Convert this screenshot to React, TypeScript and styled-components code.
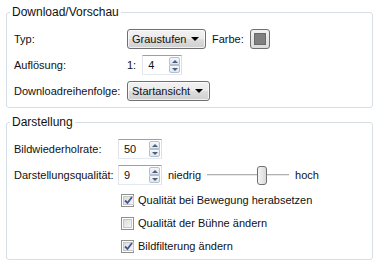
import React from "react"
import styled, { createGlobalStyle } from "styled-components"

const GlobalStyle = createGlobalStyle`
  html, body {
    margin: 0;
    padding: 0;
    background: #ffffff;
  }
  body {
    font-family: "Liberation Sans", Arial, sans-serif;
    font-size: 11px;
    color: #111111;
  }
`

const Page = styled.div`
  width: 367px;
  padding: 5px 0 0 6px;
  display: flex;
  flex-direction: column;
  gap: 7px;
`

const Group = styled.fieldset<{ $bottom: number }>`
  margin: 0;
  padding: 10px 7px ${(p) => p.$bottom}px 7px;
  border: 1px solid #d5dfe5;
  border-radius: 3px;
`

const Legend = styled.legend`
  margin-left: -4px;
  padding: 0 2px;
  line-height: 14px;
  font-size: 12px;
`

const Rows = styled.div<{ $labelWidth: number }>`
  display: grid;
  grid-template-columns: ${(p) => p.$labelWidth}px 1fr;
  row-gap: 6px;
  align-items: center;
`

const Label = styled.div`
  font-size: 11px;
  line-height: 20px;
  white-space: nowrap;
`

const Controls = styled.div`
  display: flex;
  align-items: center;
  gap: 6px;
  height: 20px;
  white-space: nowrap;
`

const Combo = styled.div<{ $width: number }>`
  box-sizing: border-box;
  width: ${(p) => p.$width}px;
  height: 20px;
  display: flex;
  align-items: center;
  justify-content: space-between;
  padding: 0 6px 0 4px;
  border: 1px solid #707070;
  border-radius: 3px;
  background: linear-gradient(#f2f2f2 0%, #ebebeb 48%, #dddddd 52%, #cfcfcf 100%);
  box-shadow: inset 0 0 0 1px rgba(255, 255, 255, 0.7);
`

const Arrow = styled.span`
  width: 0;
  height: 0;
  border-left: 4px solid transparent;
  border-right: 4px solid transparent;
  border-top: 4px solid #000000;
`

const Swatch = styled.div`
  box-sizing: border-box;
  width: 20px;
  height: 20px;
  padding: 3px;
  border: 1px solid #707070;
  border-radius: 3px;
  background: linear-gradient(#f2f2f2, #dcdcdc);
`

const SwatchColor = styled.div<{ $color: string }>`
  width: 12px;
  height: 12px;
  background: ${(p) => p.$color};
  border: 1px solid #6a6a6a;
  box-sizing: border-box;
`

const Spinner = styled.div<{ $width: number }>`
  box-sizing: border-box;
  flex: none;
  width: ${(p) => p.$width}px;
  height: 20px;
  display: flex;
  align-items: center;
  justify-content: space-between;
  padding: 1px 1px 1px 5px;
  border: 1px solid #abadb3;
  border-top-color: #9c9fa6;
  border-right-color: #dbdfe6;
  border-bottom-color: #e3e9ef;
  border-left-color: #e2e3ea;
  background: #ffffff;
`

const SpinButtons = styled.div`
  display: flex;
  flex-direction: column;
  height: 16px;
  width: 11px;
`

const SpinButton = styled.div<{ $up?: boolean }>`
  flex: 1;
  display: flex;
  align-items: center;
  justify-content: center;
  border: 1px solid #b6c0cf;
  border-radius: ${(p) => (p.$up ? "2px 2px 0 0" : "0 0 2px 2px")};
  background: linear-gradient(#f4f7fb, #dfe6ef);
  &::after {
    content: "";
    width: 0;
    height: 0;
    border-left: 3px solid transparent;
    border-right: 3px solid transparent;
    ${(p) => (p.$up ? "border-bottom: 3px solid #4c607a;" : "border-top: 3px solid #4c607a;")}
  }
`

const SliderTrack = styled.div`
  position: relative;
  flex: none;
  width: 82px;
  height: 20px;
  &::before {
    content: "";
    position: absolute;
    left: 0;
    right: 0;
    top: 9px;
    height: 1px;
    background: #b0b0b0;
    border-bottom: 1px solid #e8e8e8;
  }
`

const SliderThumb = styled.div`
  position: absolute;
  top: 1px;
  box-sizing: border-box;
  width: 10px;
  height: 19px;
  border: 1px solid #707070;
  border-radius: 3px;
  background: linear-gradient(90deg, #f4f4f4, #d9d9d9);
`

const CheckList = styled.div`
  grid-column: 2;
  display: flex;
  flex-direction: column;
  gap: 5px;
`

const CheckRow = styled.label`
  display: flex;
  align-items: center;
  gap: 4px;
  height: 18px;
  padding-left: 3px;
  line-height: 18px;
`

const Box = styled.span`
  box-sizing: border-box;
  width: 13px;
  height: 13px;
  border: 1px solid #8f8f8f;
  padding: 1px;
  background: #ffffff;
  display: flex;
`

const BoxInner = styled.span`
  flex: 1;
  display: flex;
  align-items: center;
  justify-content: center;
  border: 1px solid #c6c6c6;
  background: linear-gradient(135deg, #dcdcdc, #f6f6f6);
`

function Spin({ value, width }: { value: string; width: number }) {
  return (
    <Spinner $width={width}>
      <span>{value}</span>
      <SpinButtons>
        <SpinButton $up />
        <SpinButton />
      </SpinButtons>
    </Spinner>
  )
}

function Check({ checked, children }: { checked: boolean; children: React.ReactNode }) {
  return (
    <CheckRow>
      <Box>
        <BoxInner>
          {checked && (
            <svg width="9" height="9" viewBox="0 0 9 9">
              <path d="M1 4.5 L3.5 7 L8 1" fill="none" stroke="#3f5796" strokeWidth="1.8" />
            </svg>
          )}
        </BoxInner>
      </Box>
      {children}
    </CheckRow>
  )
}

const quality = 7
const qualityMax = 10

export default function App() {
  const thumbLeft = Math.round((quality / qualityMax) * (82 - 10))
  return (
    <>
      <GlobalStyle />
      <Page>
        <Group $bottom={6}>
          <Legend>Download/Vorschau</Legend>
          <Rows $labelWidth={113}>
            <Label>Typ:</Label>
            <Controls>
              <Combo $width={79}>
                Graustufen <Arrow />
              </Combo>
              <span>Farbe:</span>
              <Swatch>
                <SwatchColor $color="#808080" />
              </Swatch>
            </Controls>
            <Label>Auflösung:</Label>
            <Controls>
              <span>1:</span>
              <Spin value="4" width={40} />
            </Controls>
            <Label>Downloadreihenfolge:</Label>
            <Controls>
              <Combo $width={83}>
                Startansicht <Arrow />
              </Combo>
            </Controls>
          </Rows>
        </Group>
        <Group $bottom={4}>
          <Legend>Darstellung</Legend>
          <Rows $labelWidth={104}>
            <Label>Bildwiederholrate:</Label>
            <Controls>
              <Spin value="50" width={44} />
            </Controls>
            <Label>Darstellungsqualität:</Label>
            <Controls>
              <Spin value="9" width={44} />
              <span>niedrig</span>
              <SliderTrack>
                <SliderThumb style={{ left: thumbLeft }} />
              </SliderTrack>
              <span>hoch</span>
            </Controls>
            <CheckList>
              <Check checked>Qualität bei Bewegung herabsetzen</Check>
              <Check checked={false}>Qualität der Bühne ändern</Check>
              <Check checked>Bildfilterung ändern</Check>
            </CheckList>
          </Rows>
        </Group>
      </Page>
    </>
  )
}
